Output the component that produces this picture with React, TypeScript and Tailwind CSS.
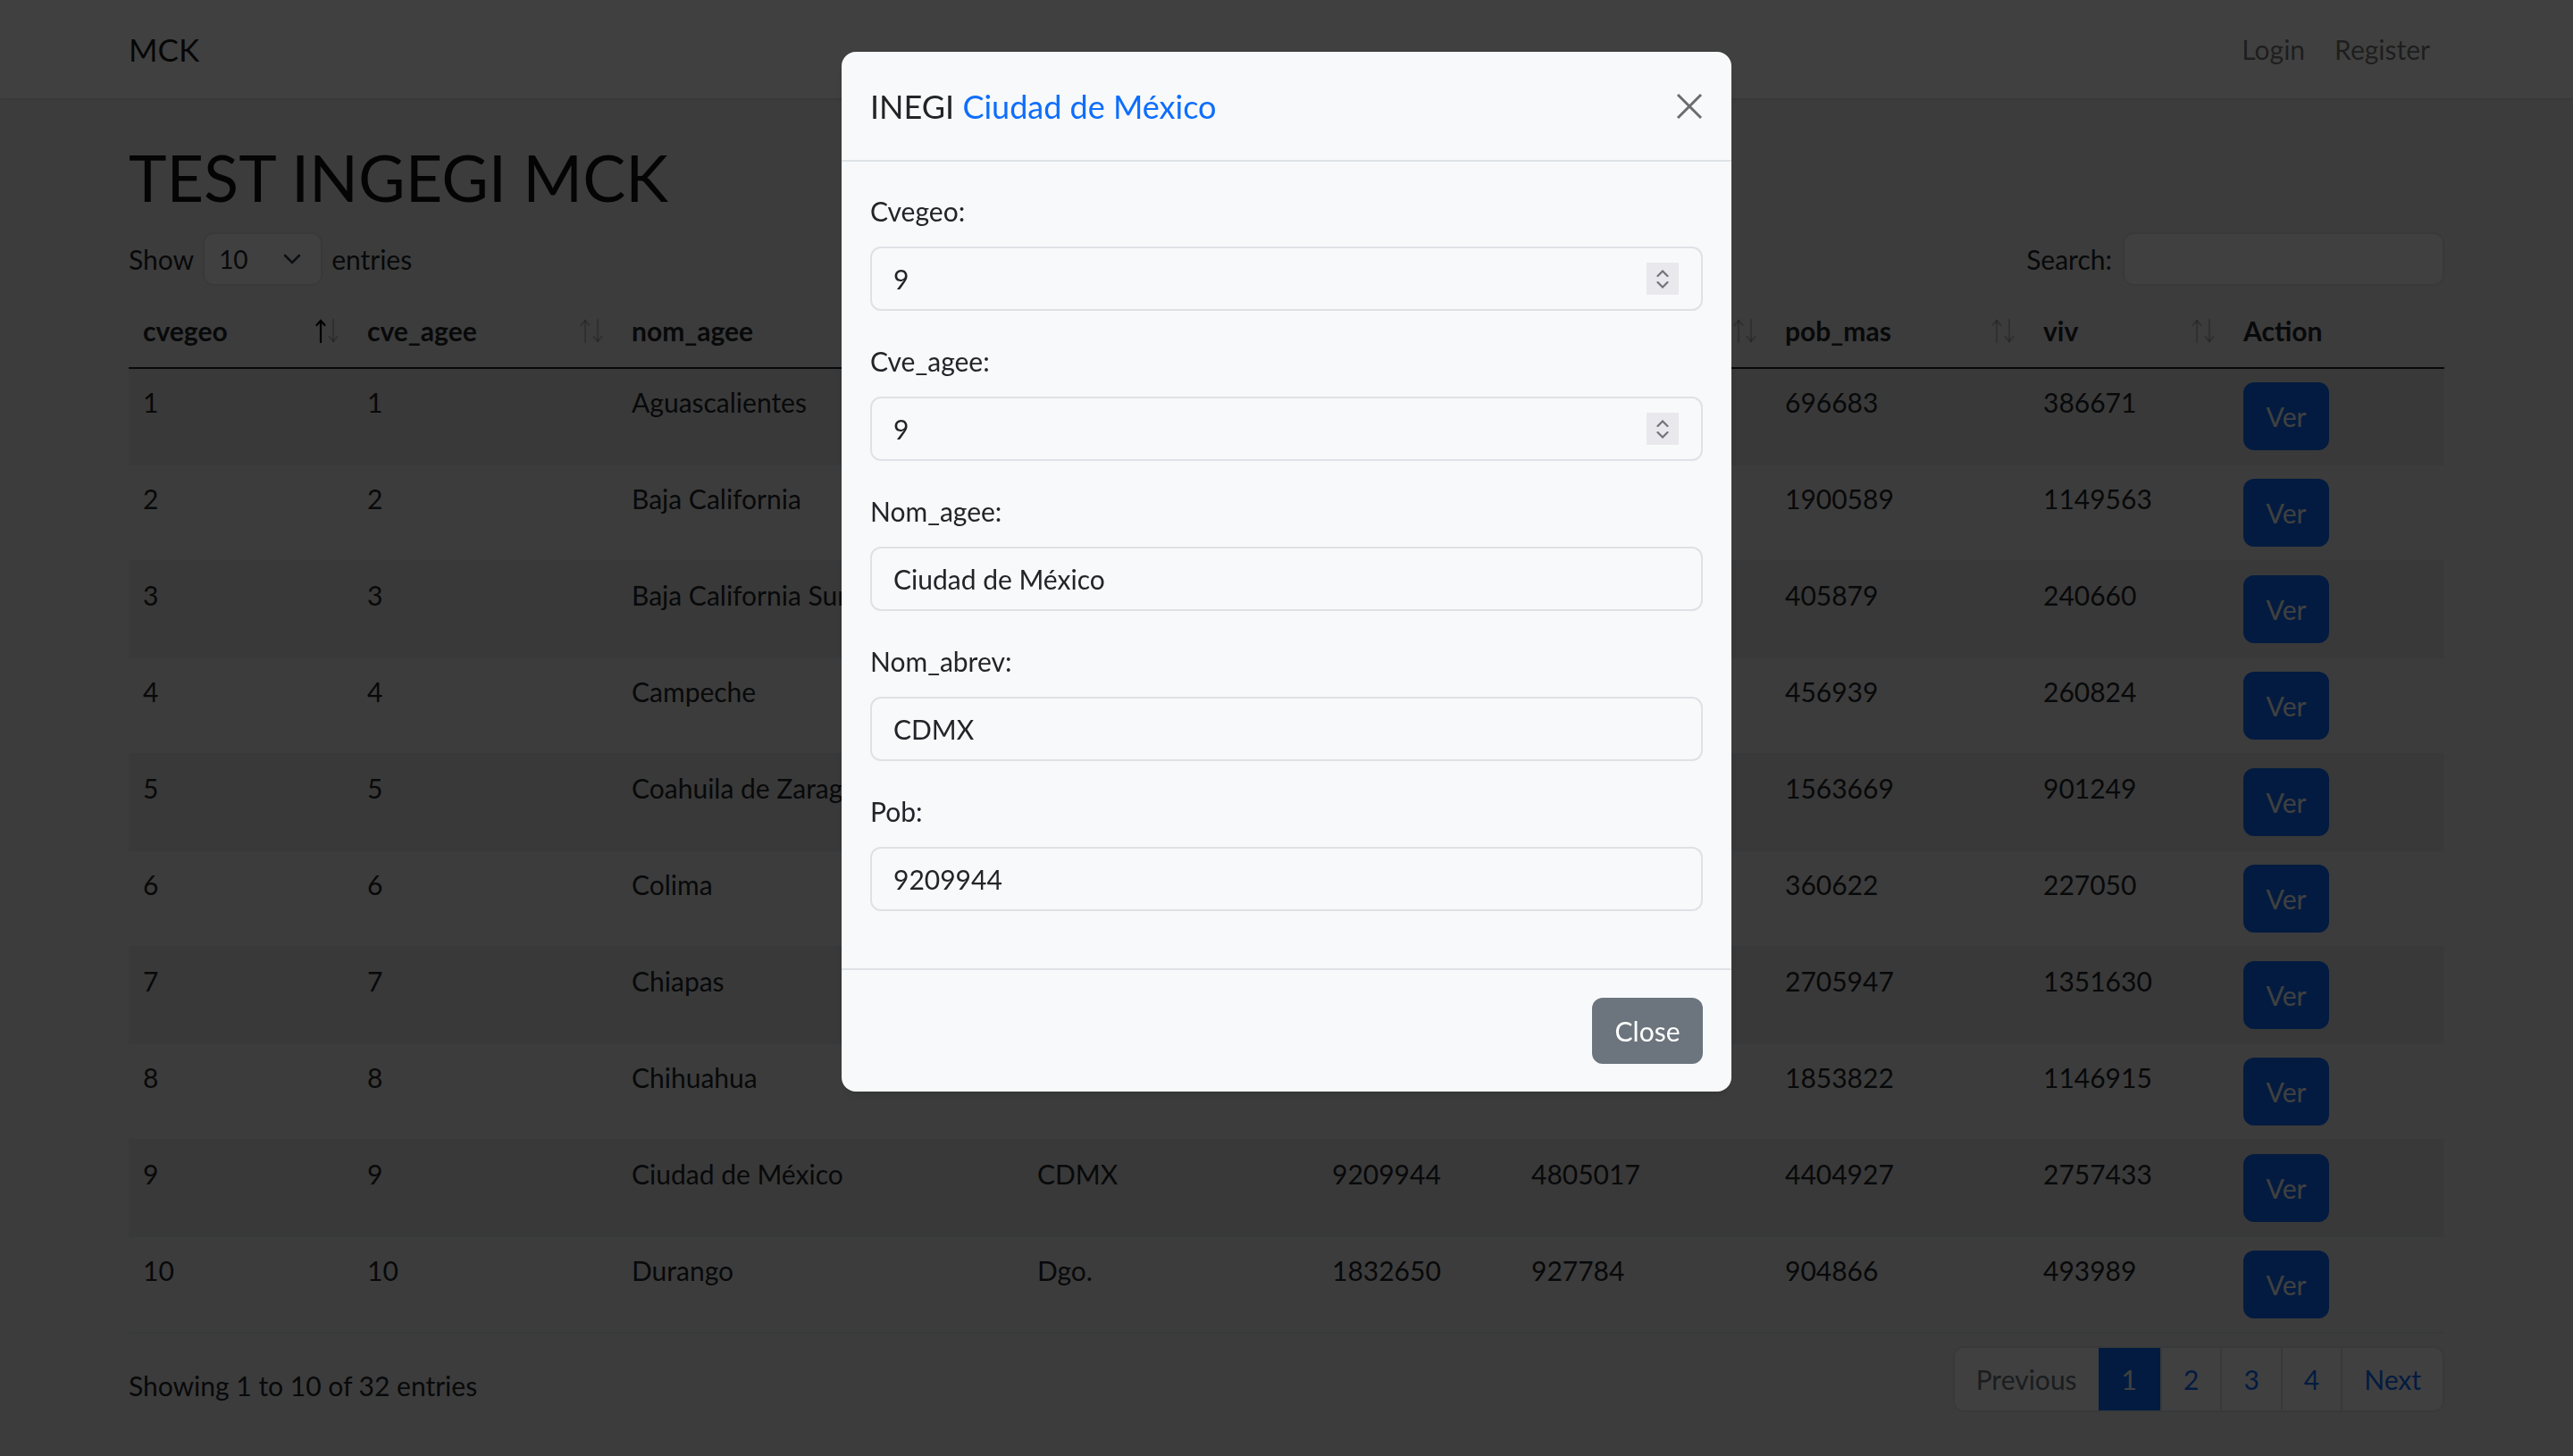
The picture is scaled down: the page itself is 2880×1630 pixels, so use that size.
import React from 'react';

const columns = [
  { name: 'cvegeo', w: 'w-[251px]', sort: 'asc' },
  { name: 'cve_agee', w: 'w-[296px]', sort: 'none' },
  { name: 'nom_agee', w: 'w-[454px]', sort: 'none' },
  { name: 'nom_abrev', w: 'w-[330px]', sort: 'none' },
  { name: 'pob', w: 'w-[223px]', sort: 'none' },
  { name: 'pob_fem', w: 'w-[284px]', sort: 'none' },
  { name: 'pob_mas', w: 'w-[289px]', sort: 'none' },
  { name: 'viv', w: 'w-[224px]', sort: 'none' },
  { name: 'Action', w: 'w-[241px]', sort: '' },
];

const rows = [
  ['1', '1', 'Aguascalientes', 'Ags.', '1425607', '728924', '696683', '386671'],
  ['2', '2', 'Baja California', 'BC', '3769020', '1868431', '1900589', '1149563'],
  ['3', '3', 'Baja California Sur', 'BCS', '798447', '392568', '405879', '240660'],
  ['4', '4', 'Campeche', 'Camp.', '928363', '471424', '456939', '260824'],
  ['5', '5', 'Coahuila de Zaragoza', 'Coah.', '3146771', '1583102', '1563669', '901249'],
  ['6', '6', 'Colima', 'Col.', '731391', '370769', '360622', '227050'],
  ['7', '7', 'Chiapas', 'Chis.', '5543828', '2837881', '2705947', '1351630'],
  ['8', '8', 'Chihuahua', 'Chih.', '3741869', '1887947', '1853822', '1146915'],
  ['9', '9', 'Ciudad de México', 'CDMX', '9209944', '4805017', '4404927', '2757433'],
  ['10', '10', 'Durango', 'Dgo.', '1832650', '927784', '904866', '493989'],
];

const fields = [
  { label: 'Cvegeo:', value: '9', number: true },
  { label: 'Cve_agee:', value: '9', number: true },
  { label: 'Nom_agee:', value: 'Ciudad de México', number: false },
  { label: 'Nom_abrev:', value: 'CDMX', number: false },
  { label: 'Pob:', value: '9209944', number: false },
];

function SortIcon({ active }: { active: boolean }) {
  return (
    <svg width="28" height="27" viewBox="0 0 28 27" fill="none" strokeWidth="2.2" strokeLinecap="round">
      <g stroke={active ? '#000' : 'rgba(0,0,0,0.2)'}>
        <path d="M6 26V2" />
        <path d="M1.5 7L6 2l4.5 5" />
      </g>
      <g stroke="rgba(0,0,0,0.2)">
        <path d="M20 1v24" />
        <path d="M15.5 20l4.5 5 4.5-5" />
      </g>
    </svg>
  );
}

function Spinner() {
  return (
    <div className="flex h-[36px] w-[36px] flex-col items-center justify-center gap-[5px] bg-[#e9e9ed]">
      <svg width="14" height="8" viewBox="0 0 14 8" fill="none" stroke="#73737d" strokeWidth="2.2" strokeLinecap="round">
        <path d="M1.5 7L7 1.5 12.5 7" />
      </svg>
      <svg width="14" height="8" viewBox="0 0 14 8" fill="none" stroke="#73737d" strokeWidth="2.2" strokeLinecap="round">
        <path d="M1.5 1L7 6.5 12.5 1" />
      </svg>
    </div>
  );
}

export default function App() {
  return (
    <div className="min-h-screen bg-[#f0f0f0] font-['Lato',sans-serif] text-[30px] text-[#212529]">
      <nav className="h-[110px] bg-white shadow-sm">
        <div className="mx-auto flex h-full w-[2592px] items-center justify-between">
          <span className="text-[35px] text-black/90">MCK</span>
          <div className="flex gap-[33px] pr-[16px] text-black/55">
            <a>Login</a>
            <a>Register</a>
          </div>
        </div>
      </nav>

      <main className="mx-auto w-[2592px]">
        <h1 className="mt-[44px] mb-[18px] text-[72px] leading-[88px] font-normal text-[#111]">TEST INGEGI MCK</h1>

        <div className="flex h-[60px] items-center justify-between">
          <div className="flex items-center gap-[10px]">
            <span>Show</span>
            <div className="flex h-[60px] w-[134px] items-center justify-between rounded-[12px] border-2 border-[#dee2e6] bg-white pl-[16px] pr-[22px] text-[28px]">
              <span>10</span>
              <svg width="20" height="12" viewBox="0 0 20 12" fill="none" stroke="#343a40" strokeWidth="2.5" strokeLinecap="round">
                <path d="M2 2l8 8 8-8" />
              </svg>
            </div>
            <span>entries</span>
          </div>
          <div className="flex items-center gap-[12px]">
            <span>Search:</span>
            <div className="h-[60px] w-[360px] rounded-[12px] border-2 border-[#dee2e6] bg-white" />
          </div>
        </div>

        <table className="mt-[10px] w-full table-fixed border-collapse">
          <thead>
            <tr className="h-[82px] border-b-2 border-[#212529]">
              {columns.map((c) => (
                <th key={c.name} className={`${c.w} px-0 text-left font-bold`}>
                  <div className="flex items-center justify-between pl-[16px] pr-[14px]">
                    <span>{c.name}</span>
                    {c.sort !== '' && <SortIcon active={c.sort === 'asc'} />}
                  </div>
                </th>
              ))}
            </tr>
          </thead>
          <tbody>
            {rows.map((r, i) => (
              <tr
                key={r[0]}
                className={`h-[108px] border-b-2 border-[#dee2e6] ${i % 2 === 0 ? 'bg-black/[0.05]' : ''}`}
              >
                {r.map((cell, j) => (
                  <td key={j} className="px-[16px] pt-[13px] align-top leading-[48px]">
                    {cell}
                  </td>
                ))}
                <td className="px-[16px] pt-[15px] align-top">
                  <button className="h-[76px] w-[96px] rounded-[12px] bg-[#0d6efd] text-white">Ver</button>
                </td>
              </tr>
            ))}
          </tbody>
        </table>

        <div className="mt-[14px] flex items-start justify-between">
          <div className="pt-[20px] leading-[48px]">Showing 1 to 10 of 32 entries</div>
          <div className="flex h-[74px] overflow-hidden rounded-[12px] border-2 border-[#dee2e6] bg-white">
            <span className="flex items-center px-[24px] text-[#6c757d]">Previous</span>
            <span className="flex items-center bg-[#0d6efd] px-[26px] text-white">1</span>
            <span className="flex items-center border-l-2 border-[#dee2e6] px-[24px] text-[#0d6efd]">2</span>
            <span className="flex items-center border-l-2 border-[#dee2e6] px-[24px] text-[#0d6efd]">3</span>
            <span className="flex items-center border-l-2 border-[#dee2e6] px-[24px] text-[#0d6efd]">4</span>
            <span className="flex items-center border-l-2 border-[#dee2e6] px-[24px] text-[#0d6efd]">Next</span>
          </div>
        </div>
      </main>

      {/* modal backdrop */}
      <div className="fixed inset-0 bg-black/75" />

      <div className="fixed inset-0 flex justify-center pt-[58px]">
        <div className="h-fit w-[996px] rounded-[16px] bg-[#f8f9fa] shadow-lg">
          <div className="flex h-[123px] items-center justify-between border-b-2 border-[#dee2e6] px-[32px]">
            <h5 className="text-[36px] leading-[48px]">
              INEGI <span className="text-[#0d6efd]">Ciudad de México</span>
            </h5>
            <button className="mr-[-2px] p-[2px]">
              <svg width="30" height="30" viewBox="0 0 30 30" fill="none" stroke="#6c6c6c" strokeWidth="3">
                <path d="M2 2l26 26M28 2L2 28" />
              </svg>
            </button>
          </div>

          <div className="px-[32px] pt-[31px] pb-[32px]">
            {fields.map((f) => (
              <div key={f.label} className="mb-[32px]">
                <label className="mb-[16px] block leading-[48px]">{f.label}</label>
                <div className="flex h-[72px] items-center justify-between rounded-[12px] border-2 border-[#dee2e6] bg-[#f8f9fa] pl-[24px] pr-[25px]">
                  <span>{f.value}</span>
                  {f.number && <Spinner />}
                </div>
              </div>
            ))}
          </div>

          <div className="flex justify-end border-t-2 border-[#dee2e6] px-[32px] py-[31px]">
            <button className="h-[74px] w-[124px] rounded-[12px] bg-[#6c757d] text-white">Close</button>
          </div>
        </div>
      </div>
    </div>
  );
}
